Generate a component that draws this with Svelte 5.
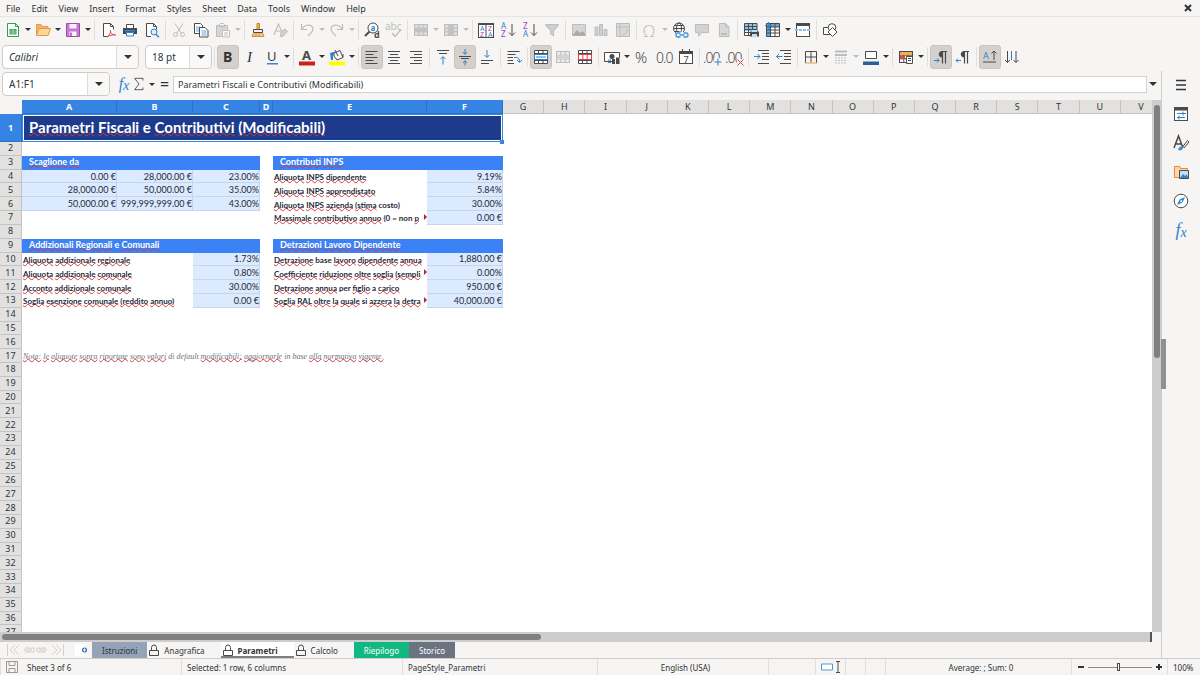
<script lang="ts">
  type Tool = { icon?: string; label?: string; drop?: boolean; on?: boolean; off?: boolean; sep?: boolean };
  type Cell = { span?: number; text?: string; kind?: string; cut?: boolean };

  const menus = ["File", "Edit", "View", "Insert", "Format", "Styles", "Sheet", "Data", "Tools", "Window", "Help"];

  const K = "#4a4a4a";
  const B = "#2f83cc";
  const G = "#bdbdbd";
  const P = "#a33fb0";
  const R = "#e0434b";
  const line = (d: string, c = K, w = 1) => `<path d="${d}" fill="none" stroke="${c}" stroke-width="${w}"/>`;
  const fill = (d: string, c = K) => `<path d="${d}" fill="${c}"/>`;
  const glyph = (t: string, x: number, y: number, s: number, c = K, extra = "") =>
    `<text x="${x}" y="${y}" font-size="${s}" fill="${c}" font-family="Noto Sans, sans-serif" ${extra}>${t}</text>`;
  const grid = (c: string, bg = "#fff") =>
    `<rect x="1.5" y="2.5" width="13" height="11" fill="${bg}" stroke="${c}"/>` +
    line("M1.5 6.2h13M1.5 9.8h13M5.8 2.5v11M10.2 2.5v11", c);
  const bold = 'font-weight="bold"';
  const thin = 'font-weight="300"';

  const icons: Record<string, string> = {
    new: fill("M2.5 1.5h8l3 3v10h-11z", "#fff") + line("M2.5 1.5h8l3 3v10h-11zM10.5 1.5v3h3", "#2f9e4f") +
      fill("M4.5 7h7v5.5h-7z", "#2f9e4f") + line("M4.5 9h7M4.5 11h7M8 7v6", "#d8f0dd", 0.6),
    open: fill("M1 2.5h5l1.5 2H13v3H4L1 13.5z", "#f6b26b") + fill("M4 6.5h12L13.5 14h-12z", "#fbd69c") +
      line("M1.5 13.5v-11H6l1.5 2H13v2M4 6.5h11.5l-2.5 7H1.5z", "#e59a45"),
    save: fill("M1.5 1.5h13v13h-13z", "#c679d0") + fill("M4.5 1.5h7v5h-7zM4.5 9.5h7v5h-7z", "#fbf3fc") +
      line("M1.5 1.5h13v13h-13z", "#a14cad") + line("M6 10.5V14", "#a14cad", 1.5),
    pdf: fill("M3.5 1.5h7l3 3v10h-10z", "#fff") + line("M8 14.5H3.5v-13h7l3 3v3M10.5 1.5v3h3") +
      line("M7 15c3-2 3.5-4.5 3.5-6.5 0 3 2 4.5 5 4.5-3-.5-6 .5-8.500 2", R),
    print: fill("M4 2h8v4H4z", "#fff") + line("M4.5 6V2.5h7V6") + fill("M1 6h14v6H1z") +
      fill("M3 8h10v1.500H3z", B) + fill("M4 10.5h8v4H4z", "#fff") + line("M4.5 10.5h7V14h-7z", B),
    preview: fill("M2.5 1.5h7l3 3v10h-10z", "#fff") + line("M7 14.5H2.5v-13h7l3 3v3M9.5 1.5v3h3") +
      `<circle cx="10" cy="10" r="3" fill="#d9ecfa" stroke="${B}"/>` + line("M12 12.5l3 2.8", B, 1.5),
    cut: line("M4 1.5l6.5 10M12 1.5l-6.5 10", G) +
      `<g fill="none" stroke="${G}"><circle cx="4.5" cy="12.5" r="2"/><circle cx="11.5" cy="12.5" r="2"/></g>`,
    copy: fill("M1.5 1.5h6l2 2v8h-8z", "#fff") + line("M1.5 1.5h6l2 2v8h-8z") + line("M3 5h4M3 7h4M3 9h4", B, 0.7) +
      fill("M6.5 5.5H12L15 8.5V15H6.5z", "#fff") + line("M6.5 5.5H12l3 3V15H6.5z") + line("M8.5 9h5M8.5 11h5M8.5 13h5", B, 0.7),
    paste: fill("M1.5 3h11v12h-11z", "#d6d6d6") + line("M4.5 3.5h-3v11h5M9.5 3.5h3v4M4.5 4.500v-2l1-1h3l1 1v2z", G) +
      fill("M7.5 8.5h7v7h-7z", "#fff") + line("M7.5 8.5h7V15h-7zM9 11h4M9 13h4", G),
    brush: fill("M7 1h2.5v6H7z", "#f2b04d") + line("M7 1.5h2.5v6H7z", "#c98227") + line("M3.5 7.5h9v3h-9z") +
      fill("M3 11h10l1 4H2z", "#f7c987") + line("M3.5 11L2 14.5h12L12.5 11M6 11v3M9 11v3", "#d58d31"),
    clear: line("M2 13L6.5 2 11 13M3.5 9h5", G, 1.2) + fill("M9 10l4-3 2.5 2.5-4.5 5H8.500z", "#d0d0d0") +
      line("M9 10l4-3 2.5 2.5-4.5 5H8.5z", G),
    undo: line("M2.5 2v5.500H8M2.5 7.500C5 3 11 1.5 13.500 5c1.500 3-1 6-4.500 9", G, 1.2),
    redo: line("M13.500 2v5.500H8M13.500 7.500C11 3 5 1.500 2.500 5c-1.500 3 1 6 4.500 9", G, 1.2),
    find: `<circle cx="9" cy="6" r="5" fill="#fff" stroke="${K}"/>` + line("M5.5 9.5L1 14", K, 2) +
      glyph("a", 6.5, 8.5, 8, B, bold) + glyph("d", 10, 15.5, 9, K, bold),
    spell: glyph("abc", -1, 8, 10, G) + line("M6 11l3 3.5 6-7", G, 1.3),
    rows: grid(G, "#ddd") + fill("M1 6h14v4H1z", "#c2c2c2"),
    cols: grid(G, "#ddd") + fill("M5.5 2h5v12h-5z", "#c2c2c2"),
    autosort: `<rect x=".5" y="1.5" width="15" height="14" fill="#fff" stroke="${K}"/>` + fill("M0 1h16v2H0z") + line("M8 3v12") +
      glyph("A", 2, 9, 7, B) + glyph("Z", 2, 15, 7, P) + glyph("Z", 10, 9, 7, P) + glyph("A", 10, 15, 7, B),
    asc: glyph("A", 1, 7, 8, B) + glyph("Z", 1, 15, 8, P) + line("M12 2v11.5M9 10.5l3 3 3-3"),
    desc: glyph("Z", 1, 7, 8, P) + glyph("A", 1, 15, 8, B) + line("M12 2v11.5M9 10.5l3 3 3-3"),
    filter: fill("M1.5 2h13v2L10 9v5l-3-1.5V9L1.5 4z", "#cfcfcf") + line("M1.5 2.5h13l-5 6V14l-3-2V8.5z", G),
    image: fill("M1.5 2h13v12h-13z", "#d5d5d5") + line("M1.5 2.5h13v11h-13z", G) + fill("M2 13l4-5 3 3 2.5-2 2.5 3v1.5H2z", "#a9a9a9"),
    chart: fill("M2 5h3v9H2zM6.500 2h3v12h-3zM11 7.5h3V14h-3z", "#cfcfcf") + line("M2 5h3v8.500H2zM6.500 2.5h3v11h-3zM11 7.5h3v6h-3z", G),
    pivot: fill("M1.5 1.5h13v13h-13z", "#dadada") + line("M1.5 1.5h13v13h-13zM1.5 5h13M5 1.5v13M7.5 12.5c3 0 4.5-1.5 4.5-4M10.5 9L12 7.5 13.5 9", G),
    omega: glyph("Ω", 1, 14.5, 17, G, thin),
    link: `<g fill="none" stroke="${K}"><circle cx="7" cy="6.5" r="5.5"/><ellipse cx="7" cy="6.5" rx="2.5" ry="5.5"/></g>` +
      line("M1.5 6.5h11M2.5 3.5h9M2.5 9.5h5") + fill("M4 10h12v6H4z", "#f6f5f4") +
      line("M8.5 15H6a2 2 0 0 1 0-4h2.5M11.5 11H14a2 2 0 0 1 0 4h-2.5M7.5 13h5", "#3b93da", 1.3),
    comment: fill("M1.5 2h13v9H8l-3.500 4v-4h-3z", "#d3d3d3") + line("M1.5 2.5h13v8H8L4.5 14v-3.500h-3z", G),
    header: fill("M3 1.5h7l3 3v10H3z", "#d8d8d8") + line("M3.5 1.5h6L13 5v9.5H3.5zM9.5 1.5V5H13", G) + line("M5 12h6", G, 2),
    printarea: fill("M1 1.5h13V14H1z", "#fff") + fill("M1 1.5h13V9H1z", "#8dc5ee") +
      line("M1.5 1.5H14v12H1.5zM1.5 4.5H14M1.5 7.5H14M1.5 10.5H14M5.5 1.5v12M9.5 1.5v12") +
      fill("M7 9.500h9v5H7z") + fill("M9 8h5v2H9zM9 12h5v3.500H9z", "#bfe0f7"),
    freeze: fill("M1.5 1.5h13v13h-13z", "#fff") + fill("M1.5 1.5h13V5h-13zM1.5 1.5h4v13h-4z", "#5aace6") +
      line("M1.5 1.5h13v13h-13zM1.5 5h13M1.5 8h13M1.5 11h13M5.5 1.5v13M10 1.5v13") + line("M3.5 0v7M0 3.5h7", B),
    split: `<rect x="1.5" y="1.5" width="13" height="13" fill="#fff" stroke="${K}"/>` + fill("M1 1h14v3H1z") +
      fill("M0 7h16v2H0z", "#f6f5f4") + `<path d="M0 8h16" stroke="${B}" stroke-dasharray="3 1"/>`,
    shapes: fill("M1.5 5.5h7v7h-7z", "#fff") + line("M1.5 5.5h7v7h-7z") + `<circle cx="10" cy="5.5" r="3.8" fill="#fff" stroke="${K}"/>` +
      fill("M10.5 5.5L15 10l-4.5 4.5L6 10z", "#fff") + line("M10.5 5.5L15 10l-4.5 4.5L6 10z"),
    bold: glyph("B", 3, 13, 14, "#2e3436", bold),
    italic: `<text x="5" y="13" font-size="15" fill="#2e3436" font-family="Liberation Serif, serif" font-style="italic">I</text>`,
    underline: glyph("U", 3, 12, 13, "#3c4144") + fill("M3 14h11v1.500H3z", "#3584e4"),
    color: glyph("A", 3, 10.5, 13, K, bold) + fill("M0 12.5h16v4H0z", "#c9211e"),
    bucket: line("M5 4l6-2.5 3 7L8 11 5 7z") + line("M6 1l3 6M14 8V5") + fill("M1 4l5-1.5L4 7v4H2z", B) + fill("M0 12.5h16v4H0z", "#ffff00"),
    left: line("M1.5 2.5h12M1.5 5.5h8M1.5 8.5h12M1.5 11.5h8M1.5 14.5h12"),
    center: line("M2 2.5h12M4 5.5h8M2 8.5h12M4 11.5h8M2 14.5h12"),
    right: line("M2 2.5h12M6 5.5h8M2 8.5h12M6 11.5h8M2 14.5h12"),
    top: line("M2 1.5h12M4 4.5h8") + line("M8 15.500V8M5.5 10L8 7.5l2.5 2.5", B),
    middle: line("M2 7.5h12M4 9.5h8") + line("M8 0v5M6 3l2 2.5L10 3M8 16.500V12M6 14l2-2.500 2 2.500", B),
    bottom: line("M2 11.5h12M2 14.5h8") + line("M8 1v7M5.5 6L8 8.5 10.5 6", B),
    wrap: line("M1.5 2.5h12M1.5 5.5h8M1.5 8.5H7M1.5 11.5H7M1.5 14.5h12") + fill("M8 11h7v5H8z", "#f6f5f4") +
      line("M8 8.5h2.500c2 0 3 1.500 3 4.500M11 11l2.500 2.500L16 11", B),
    merge: fill("M1 2h14v12H1z", "#fff") + line("M1.5 1.5h13v13h-13zM1.5 4.5h13M1.5 11.5h13M5.5 1.5v3M10 1.5v3M5.5 11.5v3M10 11.5v3") +
      line("M1.5 5.5h13v5h-13zM3 8h10", B),
    mergecenter: grid(G, "#ececec") + fill("M2 6h12v4H2z", "#d3d3d3"),
    unmerge: fill("M1 2h14v12H1z", "#fff") + line("M1.5 1.5h13v13h-13zM1.5 4.5h13M1.5 11.5h13M5.5 1.5v3M10 1.5v3M5.5 11.5v3M10 11.5v3") +
      line("M1.5 5.5h13v5h-13zM5.8 5.5v5M10.2 5.5v5", R),
    currency: fill("M.5 4h15v7H.5z", "#fff") + line("M8 12.5H.5v-9h15v5") + `<circle cx="8" cy="7.5" r="2.5" fill="${K}"/>` +
      line("M4 13.5h3M4 11h3", B) + fill("M8 10h3v5H8zM12 8.5h3.500V15H12z"),
    percent: glyph("%", 1, 13.5, 15, K, thin),
    number: glyph("0.0", 0, 13.5, 14, K, `${thin} letter-spacing="-1"`),
    date: `<rect x="1.5" y="2.5" width="13" height="12" fill="#fff" stroke="${K}"/>` + fill("M1 2h14v3H1zM4 0h1v3H4zM11 0h1v3h-1z") + glyph("7", 5.5, 13.5, 9),
    adddec: glyph(".00", -2, 13.5, 14, K, `${thin} letter-spacing="-1"`) + fill("M9 9h8v8H9z", "#f6f5f4") + line("M9.500 13h7M13 9.500v7", B),
    deldec: glyph(".00", -2, 13.5, 14, K, `${thin} letter-spacing="-1"`) + fill("M10 10h7v7h-7z", "#f6f5f4") + line("M10.500 10.500l6 6M16.500 10.500l-6 6", R),
    indent: line("M4 1.5h11M8 4.5h7M8 7.5h7M8 10.5h7M4 14.5h11") + line("M0 7.5h6M3.5 5L6 7.5 3.5 10", B),
    outdent: line("M4 1.5h11M8 4.5h7M8 7.5h7M8 10.5h7M4 14.5h11") + line("M6.5 7.5h-6M3 5L.5 7.5 3 10", B),
    borders: line("M2.5 14V2.5h11V14M8 2.5v11M2.5 8h11") + line("M2 14h12", "#e8a04c"),
    style: line("M2 2.5h12M2 6h12", G, 2) + `<path d="M2 9h12M2 11.5h12M2 14h12" stroke="${G}" stroke-dasharray="2 1"/>`,
    bordercolor: fill("M2 2h12v8H2z", "#fff") + line("M2.5 2.5h11v7h-11z") + fill("M0 12.5h16V16H0z", "#2a6099"),
    cond: grid(K) + fill("M2 3h12v3H2z", "#f2b04d") + fill("M2 7h5v3H2z", R) + fill("M9 8h7v7H9z", "#fff") + line("M8.5 7.5h6v7h-6zM10 9.5h3M10 11.5h3"),
    ltr: line("M8 2.5h6M9.5 2.5v12M12.5 2.5v12", K, 1.2) + fill("M9.5 2C4.500 2 4.500 8.500 9.5 8.500z") + line("M1 11.5h5M4 9.5l2 2-2 2", B),
    rtl: line("M8 2.5h6M9.5 2.5v12M12.5 2.5v12", K, 1.2) + fill("M9.5 2C4.500 2 4.500 8.500 9.5 8.500z") + line("M6 11.5H1M3 9.5l-2 2 2 2", B),
    horiz: glyph("A", 1, 10, 9, B) + line("M1 13h13M12 2v9M9.5 4.5L12 2l2.5 2.5"),
    vert: line("M3.5 2v11.5M1 11l2.500 2.500L6 11M12 2v11.500M9.500 11l2.500 2.500 2.500-2.500") + line("M7.5 2v9", B),
    sum: line("M12.500 4V1.5H3L8 8l-5 6.500h9.500V12"),
    props: `<rect x="1.5" y="1.5" width="13" height="13" fill="#fff" stroke="${K}"/>` + fill("M1 1h14v3.500H1z") + line("M4 7.5h9M10 5.5v4M4 11.5h8M6 9.5v4", B),
    styles: line("M1 13L5.5 1 10 13M3 9h5.500", K, 1.5) + fill("M5 15c1-4 3-4 5-3 0 3-2 4-5 3z", "#3b93da") + line("M9.5 12l5-6.500L16 7l-5 6"),
    gallery: fill("M1 2h6l1 2h7v10H1z", "#fcd7a5") + line("M1.5 13.5v-11h5l1 2h7v3M1.5 13.5H6", "#e8893a") + fill("M6.500 7h9v8h-9z", "#bfe0f7") +
      line("M6.5 6.5h9v8h-9z") + fill("M7 14l3-4 2 2 1.500-1.500 2 3.500z", B),
    navigator: `<circle cx="8" cy="8" r="6.8" fill="#fff" stroke="${K}"/>` + fill("M12 4L9.5 9.5 4 12l2.500-5.500z", B) + fill("M8 7l1.500 1L8 9.5 7 8z", "#fff"),
    burger: line("M3 3.5h10M3 8h10M3 12.5h10", "#2e3436", 1.6)
  };

  const sep: Tool = { sep: true };
  const standard: Tool[] = [
    { icon: "new", label: "New", drop: true }, { icon: "open", label: "Open", drop: true }, { icon: "save", label: "Save", drop: true }, sep,
    { icon: "pdf", label: "Export as PDF" }, { icon: "print", label: "Print" }, { icon: "preview", label: "Print Preview" }, sep,
    { icon: "cut", label: "Cut", off: true }, { icon: "copy", label: "Copy" }, { icon: "paste", label: "Paste", drop: true, off: true }, sep,
    { icon: "brush", label: "Clone Formatting" }, { icon: "clear", label: "Clear Formatting", off: true }, sep,
    { icon: "undo", label: "Undo", drop: true, off: true }, { icon: "redo", label: "Redo", drop: true, off: true }, sep,
    { icon: "find", label: "Find & Replace" }, { icon: "spell", label: "Spelling", off: true }, sep,
    { icon: "rows", label: "Row", drop: true, off: true }, { icon: "cols", label: "Column", drop: true, off: true }, sep,
    { icon: "autosort", label: "Sort" }, { icon: "asc", label: "Sort Ascending" }, { icon: "desc", label: "Sort Descending" }, { icon: "filter", label: "AutoFilter", off: true }, sep,
    { icon: "image", label: "Image", off: true }, { icon: "chart", label: "Chart", off: true }, { icon: "pivot", label: "Pivot Table", off: true }, sep,
    { icon: "omega", label: "Symbol", drop: true, off: true }, { icon: "link", label: "Hyperlink" }, { icon: "comment", label: "Comment", off: true }, { icon: "header", label: "Headers and Footers", off: true }, sep,
    { icon: "printarea", label: "Print Area" }, { icon: "freeze", label: "Freeze", drop: true }, { icon: "split", label: "Split Window" }, sep,
    { icon: "shapes", label: "Draw Functions" }
  ];
  const formatting: Tool[] = [
    { icon: "bold", label: "Bold", on: true }, { icon: "italic", label: "Italic" }, { icon: "underline", label: "Underline", drop: true }, sep,
    { icon: "color", label: "Font Color", drop: true }, { icon: "bucket", label: "Background Color", drop: true }, sep,
    { icon: "left", label: "Align Left", on: true }, { icon: "center", label: "Center" }, { icon: "right", label: "Align Right" }, sep,
    { icon: "top", label: "Align Top" }, { icon: "middle", label: "Center Vertically", on: true }, { icon: "bottom", label: "Align Bottom" }, sep,
    { icon: "wrap", label: "Wrap Text" }, sep,
    { icon: "merge", label: "Merge and Center", on: true }, { icon: "mergecenter", label: "Merge Cells", off: true }, { icon: "unmerge", label: "Unmerge Cells" }, sep,
    { icon: "currency", label: "Currency", drop: true }, { icon: "percent", label: "Percent" }, { icon: "number", label: "Number" }, { icon: "date", label: "Date" }, sep,
    { icon: "adddec", label: "Add Decimal" }, { icon: "deldec", label: "Delete Decimal" }, sep,
    { icon: "indent", label: "Increase Indent" }, { icon: "outdent", label: "Decrease Indent" }, sep,
    { icon: "borders", label: "Borders", drop: true }, { icon: "style", label: "Border Style", drop: true, off: true }, { icon: "bordercolor", label: "Border Color", drop: true }, sep,
    { icon: "cond", label: "Conditional", drop: true }, sep,
    { icon: "ltr", label: "Left-To-Right", on: true }, { icon: "rtl", label: "Right-To-Left" }, sep,
    { icon: "horiz", label: "Text Horizontal", on: true }, { icon: "vert", label: "Text Vertical" }
  ];
  const deck = [
    ["burger", "Sidebar Settings"], ["props", "Properties"], ["styles", "Styles"],
    ["gallery", "Gallery"], ["navigator", "Navigator"]
  ];

  const columns = "ABCDEFGHIJKLMNOPQRSTUV".split("");
  const t = (text: string, span = 1, cut = false): Cell => ({ text, span, cut, kind: "label" });
  const v = (text: string): Cell => ({ text, kind: "value" });
  const h = (text: string, span: number): Cell => ({ text, span, kind: "head" });
  const gap = (span = 1): Cell => ({ span });

  const data: Record<number, Cell[]> = {
    1: [{ text: "Parametri Fiscali e Contributivi (Modificabili)", span: 6, kind: "title" }],
    3: [h("Scaglione da", 3), gap(), h("Contributi INPS", 2)],
    4: [v("0.00 €"), v("28,000.00 €"), v("23.00%"), gap(), t("Aliquota INPS dipendente"), v("9.19%")],
    5: [v("28,000.00 €"), v("50,000.00 €"), v("35.00%"), gap(), t("Aliquota INPS apprendistato"), v("5.84%")],
    6: [v("50,000.00 €"), v("999,999,999.00 €"), v("43.00%"), gap(), t("Aliquota INPS azienda (stima costo)"), v("30.00%")],
    7: [gap(4), t("Massimale contributivo annuo (0 = non p", 1, true), v("0.00 €")],
    9: [h("Addizionali Regionali e Comunali", 3), gap(), h("Detrazioni Lavoro Dipendente", 2)],
    10: [t("Aliquota addizionale regionale", 2), v("1.73%"), gap(), t("Detrazione base lavoro dipendente annua"), v("1,880.00 €")],
    11: [t("Aliquota addizionale comunale", 2), v("0.80%"), gap(), t("Coefficiente riduzione oltre soglia (sempli", 1, true), v("0.00%")],
    12: [t("Acconto addizionale comunale", 2), v("30.00%"), gap(), t("Detrazione annua per figlio a carico"), v("950.00 €")],
    13: [t("Soglia esenzione comunale (reddito annuo)", 2), v("0.00 €"), gap(), t("Soglia RAL oltre la quale si azzera la detra", 1, true), v("40,000.00 €")],
    17: [{ text: "Nota: le aliquote sopra riportate sono valori di default modificabili; aggiornarle in base alla normativa vigente.", span: 9, kind: "note" }]
  };
  const rows = Array.from({ length: 37 }, (_, i) => i + 1);

  // words the dictionary accepts; everything else gets a wavy line
  const known = new Set(["e", "a", "si", "per", "in", "di", "base", "default", "(0", "=", "non", "costo)"]);
  const words = (text: string) => text.split(" ").map((w) => ({ w, bad: !known.has(w) }));
</script>

{#snippet icon(name: string)}
  <svg class="icon" viewBox="0 0 16 16" aria-hidden="true">{@html icons[name]}</svg>
{/snippet}

{#snippet arrow()}
  <svg class="arrow" viewBox="0 0 8 4" aria-hidden="true"><path d="M0 0h8L4 4z" /></svg>
{/snippet}

{#snippet tools(items: Tool[])}
  {#each items as item}
    {#if item.sep}
      <span class="sep"></span>
    {:else}
      <button class="tool" class:on={item.on} aria-label={item.label} disabled={item.off}>
        {@render icon(item.icon ?? "")}
      </button>
      {#if item.drop}
        <button class="drop" aria-label="{item.label} options" disabled={item.off}>{@render arrow()}</button>
      {/if}
    {/if}
  {/each}
{/snippet}

{#snippet lock()}
  <svg class="lock" viewBox="0 0 10 12" aria-hidden="true"><path d="M.5 6.5h9v5h-9zM2.5 6.5v-3a2.5 2.5 0 0 1 5 0v3" /></svg>
{/snippet}

<div class="app">
  <nav class="menubar">
    {#each menus as menu}
      <button>{menu}</button>
    {/each}
    <button class="close" aria-label="Close document">
      <svg viewBox="0 0 8 8"><path d="M1 1l6 6M7 1L1 7" /></svg>
    </button>
  </nav>

  <div class="toolbar">{@render tools(standard)}</div>
  <div class="toolbar">
    <div class="combo font">
      <input aria-label="Font name" value="Calibri" />
      <button aria-label="Font list">{@render arrow()}</button>
    </div>
    <div class="combo size">
      <input aria-label="Font size" value="18 pt" />
      <button aria-label="Size list">{@render arrow()}</button>
    </div>
    <span class="sep"></span>
    {@render tools(formatting)}
  </div>

  <div class="body">
    <main class="doc">
      <div class="formula">
        <div class="combo namebox">
          <input aria-label="Name box" value="A1:F1" />
          <button aria-label="Name list">{@render arrow()}</button>
        </div>
        <button class="fx" aria-label="Function wizard">f<sub>x</sub></button>
        <button class="sum" aria-label="Select function">{@render icon("sum")}</button>
        <button class="drop" aria-label="Function options">{@render arrow()}</button>
        <button class="equals" aria-label="Formula">=</button>
        <input class="line" aria-label="Input line" value="Parametri Fiscali e Contributivi (Modificabili)" />
        <button class="expand" aria-label="Expand formula bar">{@render arrow()}</button>
      </div>

      <div class="pane">
        <div class="view">
          <table>
            <thead>
              <tr>
                <th class="corner" aria-label="Select all"></th>
                {#each columns as col, i}
                  <th class:picked={i < 6}>{col}</th>
                {/each}
              </tr>
            </thead>
            <tbody>
              {#each rows as n}
                <tr class:tall={n === 1}>
                  <th class:picked={n === 1}>{n}</th>
                  {#each data[n] ?? [] as cell}
                    <td class="{cell.kind ?? ''} span{cell.span ?? 1}" colspan={cell.span ?? 1}>
                      {#if cell.kind === "value"}
                        {cell.text}
                      {:else if cell.text}
                        <span>
                          {#each words(cell.text) as { w, bad }, i}{i ? " " : ""}<span class:bad>{w}</span>{/each}
                        </span>
                      {/if}
                      {#if cell.cut}
                        <svg class="more" viewBox="0 0 3 6" aria-hidden="true"><path d="M0 0l3 3-3 3z" /></svg>
                      {/if}
                    </td>
                  {/each}
                </tr>
              {/each}
            </tbody>
          </table>
        </div>
        <div class="vscroll"><div class="thumb"></div></div>
      </div>

      <div class="hscroll"><div class="thumb"></div></div>

      <div class="tabs">
        <div class="tabnav">
          <button aria-label="First sheet"><svg viewBox="0 0 14 12"><path d="M1.5 0v12M9 1L4 6l5 5M13 1L8 6l5 5" /></svg></button>
          <button aria-label="Previous sheet"><svg viewBox="0 0 14 12"><path d="M6 3L3 6l3 3zM7 4h2v4H7zM10 4h3v4h-3z" /></svg></button>
          <button aria-label="Next sheet"><svg viewBox="0 0 14 12"><path d="M8 3l3 3-3 3zM5 4h2v4H5zM1 4h3v4H1z" /></svg></button>
          <button aria-label="Last sheet"><svg viewBox="0 0 14 12"><path d="M12.5 0v12M1 1l5 5-5 5M5 1l5 5-5 5" /></svg></button>
        </div>
        <button class="addsheet" aria-label="Add sheet">
          <svg viewBox="0 0 14 12"><path d="M1 0h9v12H1z" fill="#fff" /><circle cx="10.5" cy="6" r="2.5" fill="#2f6fbd" /><path d="M10.5 4.5v3M9 6h3" stroke="#fff" /></svg>
        </button>
        <button class="tab slate">Istruzioni</button>
        <button class="tab">{@render lock()}Anagrafica</button>
        <button class="tab active">{@render lock()}Parametri</button>
        <button class="tab">{@render lock()}Calcolo</button>
        <button class="tab green">Riepilogo</button>
        <button class="tab grey">Storico</button>
      </div>
    </main>

    <aside class="sidebar">
      {#each deck as [name, label]}
        <button class="tool" aria-label={label}>{@render icon(name)}</button>
      {/each}
      <button class="fx" aria-label="Functions">f<sub>x</sub></button>
      <span class="grip"></span>
    </aside>
  </div>

  <footer class="status">
    <div class="saved">
      <svg viewBox="0 0 12 12" aria-hidden="true"><path d="M.5.5h11v11H.5zM3 .5v4h6v-4M3 11.5v-4h6v4" /></svg>
      Sheet 3 of 6
    </div>
    <div>Selected: 1 row, 6 columns</div>
    <div>PageStyle_Parametri</div>
    <div class="mid">English (USA)</div>
    <div></div>
    <div class="mode">
      <svg viewBox="0 0 20 12" aria-hidden="true">
        <path d="M.5 3h11v6H.5z" fill="#fff" stroke="#4a9bd8" />
        <path d="M15 .5h4M15 11.5h4M17 .5v11" fill="none" stroke="#4a4a4a" />
      </svg>
    </div>
    <div></div>
    <div></div>
    <div class="mid">Average: ; Sum: 0</div>
    <div class="zoom">
      <button aria-label="Zoom out"><svg viewBox="0 0 8 8"><path d="M1 4h6" /></svg></button>
      <input type="range" aria-label="Zoom" min="0" max="100" value="48" />
      <button aria-label="Zoom in"><svg viewBox="0 0 8 8"><path d="M1 4h6M4 1v6" /></svg></button>
    </div>
    <div class="pct">100%</div>
  </footer>
</div>

<style>
  :global(body) {
    margin: 0;
  }
  .app {
    --accent: #3584e4;
    --cols: 22px 95px 76px 67px 13px 154px 76px repeat(16, 1fr);
    display: flex;
    flex-direction: column;
    height: 100vh;
    overflow: hidden;
    background: #f6f5f4;
    color: #2e3436;
    font-family: "Noto Sans", sans-serif;
    font-size: 9px;
  }
  button,
  input {
    margin: 0;
    padding: 0;
    border: 0;
    background: none;
    color: inherit;
    font: inherit;
    outline: none;
  }
  svg {
    display: block;
    flex: none;
  }

  .menubar {
    display: flex;
    gap: 11px;
    height: 16px;
    padding: 0 6px;
    border-bottom: 1px solid #e6e4e2;
  }
  .menubar .close {
    width: 10px;
    margin-left: auto;
  }
  .close svg {
    width: 8px;
    height: 8px;
    fill: none;
    stroke: #2e3436;
    stroke-width: 2;
  }

  .toolbar {
    display: flex;
    align-items: center;
    box-sizing: border-box;
    height: 27px;
    padding: 0 2px 2px;
  }
  .tool {
    display: flex;
    flex: none;
    align-items: center;
    justify-content: center;
    box-sizing: border-box;
    width: 22px;
    height: 24px;
    border-radius: 3px;
  }
  .tool.on {
    border: 1px solid #c9c4bf;
    background: #d5d0cc;
  }
  .icon {
    width: 16px;
    height: 16px;
    overflow: visible;
  }
  .drop {
    display: flex;
    flex: none;
    align-items: center;
    justify-content: center;
    width: 8px;
    height: 24px;
  }
  .arrow {
    width: 6px;
    height: 3px;
    fill: #2e3436;
  }
  .drop:disabled .arrow {
    fill: #bdbdbd;
  }
  .sep {
    flex: none;
    width: 1px;
    height: 20px;
    margin: 0 2px;
    background: #e1dfdc;
  }

  .combo {
    display: flex;
    flex: none;
    box-sizing: border-box;
    height: 24px;
    border: 1px solid #cfcbc7;
    border-radius: 4px;
    background: #fff;
    font-size: 10px;
  }
  .combo input {
    flex: 1;
    min-width: 0;
    padding-left: 6px;
  }
  .combo button {
    display: flex;
    align-items: center;
    justify-content: center;
    width: 22px;
    border-left: 1px solid #dedbd8;
    border-radius: 0 4px 4px 0;
    background: #f9f8f7;
  }
  .combo .arrow,
  .expand .arrow {
    width: 8px;
    height: 4px;
  }
  .font {
    width: 137px;
    margin-right: 6px;
    font-style: italic;
  }
  .size {
    width: 67px;
  }
  .namebox {
    width: 108px;
  }

  .body {
    display: flex;
    flex: 1;
    min-height: 0;
  }
  .doc {
    display: flex;
    flex: 1;
    flex-direction: column;
    min-width: 0;
    border-right: 1px solid #cfcfcf;
  }
  .formula {
    display: flex;
    flex: none;
    align-items: center;
    box-sizing: border-box;
    height: 29px;
    padding: 0 2px 3px;
  }
  .fx {
    width: 16px;
    margin-left: 6px;
    color: #2f83cc;
    font-family: "Liberation Serif", serif;
    font-size: 16px;
    font-style: italic;
    line-height: 16px;
  }
  .fx sub {
    font-size: 14px;
    line-height: 0;
    vertical-align: -1px;
  }
  .sum {
    width: 16px;
  }
  .sum .icon {
    width: 14px;
    height: 14px;
  }
  .equals {
    width: 17px;
    font-size: 16px;
    line-height: 16px;
  }
  .line {
    flex: 1;
    min-width: 0;
    box-sizing: border-box;
    height: 17px;
    padding-left: 4px;
    border: 1px solid #d5d2cf;
    background: #fff;
  }
  .expand {
    display: flex;
    align-items: center;
    justify-content: center;
    width: 12px;
  }

  .pane {
    display: flex;
    flex: 1;
    min-height: 0;
  }
  .view {
    flex: 1;
    min-width: 0;
    overflow: hidden;
    background: #fff;
  }
  table {
    display: flex;
    flex-direction: column;
    width: calc(100% + 10px);
    height: calc(100% + 7px);
  }
  thead {
    display: block;
    flex: none;
    height: 14px;
  }
  tbody {
    display: flex;
    flex: 1;
    flex-direction: column;
    min-height: 0;
  }
  tr {
    display: grid;
    flex: 1;
    grid-template-columns: var(--cols);
    min-height: 0;
  }
  thead tr {
    height: 14px;
  }
  tr.tall {
    flex: none;
    height: 28px;
  }
  th {
    display: flex;
    align-items: center;
    justify-content: center;
    min-height: 0;
    padding: 0;
    border-right: 1px solid #c4c4c4;
    border-bottom: 1px solid #c4c4c4;
    background: #e2e1e0;
    font-size: 9px;
    font-weight: 400;
    line-height: 12px;
  }
  th.corner {
    border: 0;
    background: #f6f5f4;
  }
  th.picked {
    border-color: #2b72c8;
    background: var(--accent);
    color: #fff;
    font-weight: 700;
  }
  td {
    position: relative;
    display: flex;
    align-items: center;
    min-width: 0;
    min-height: 0;
    padding: 1px 1px 0;
    line-height: 12px;
    white-space: nowrap;
  }
  .span2 {
    grid-column: span 2;
  }
  .span3 {
    grid-column: span 3;
  }
  .span4 {
    grid-column: span 4;
  }
  .span6 {
    grid-column: span 6;
  }
  .span9 {
    grid-column: span 9;
  }
  .bad {
    text-decoration: underline wavy #d8343c 1px;
    text-decoration-skip-ink: none;
    text-underline-offset: -1px;
  }
  .value {
    justify-content: flex-end;
    padding-right: 0;
    border-right: 1px solid #c6d6ea;
    border-bottom: 1px solid #c6d6ea;
    background: #dbeafe;
    color: #1f2937;
    font-family: Lato, sans-serif;
    font-size: 9px;
  }
  .label {
    color: #1f2937;
    font-family: Lato, sans-serif;
    font-size: 8px;
    font-weight: 700;
  }
  .head {
    padding: 0 0 2px 7px;
    background: #3b82f6;
    color: #fff;
    font-family: Lato, sans-serif;
    font-size: 9px;
    font-weight: 700;
  }
  .title {
    padding: 0 0 3px 7px;
    background: #1e3a8a;
    color: #fff;
    font-family: Lato, sans-serif;
    font-size: 15px;
    font-weight: 700;
    line-height: 20px;
    box-shadow:
      inset 0 0 0 1px var(--accent),
      inset 0 0 0 2px #fff;
  }
  .title::after {
    content: "";
    position: absolute;
    right: -1px;
    bottom: -2px;
    width: 4px;
    height: 4px;
    background: var(--accent);
  }
  .note {
    color: #6b7280;
    font-family: "Liberation Serif", serif;
    font-size: 8px;
    font-style: italic;
  }
  .more {
    position: absolute;
    top: 3px;
    right: 0;
    width: 3px;
    height: 6px;
    fill: #b3262e;
  }

  .vscroll,
  .hscroll {
    background: #cdcdcd;
  }
  .vscroll {
    box-sizing: border-box;
    width: 9px;
    padding: 5px 1px 0 2px;
  }
  .vscroll .thumb {
    height: 48%;
    border-radius: 3px;
    background: #808080;
  }
  .hscroll {
    flex: none;
    box-sizing: border-box;
    height: 10px;
    margin-right: 9px;
    padding: 2px;
    border-right: 2px solid #555;
  }
  .hscroll .thumb {
    width: 47%;
    height: 6px;
    border-radius: 3px;
    background: #808080;
  }

  .tabs {
    display: flex;
    flex: none;
    height: 16px;
    font-size: 8px;
  }
  .tabnav {
    display: flex;
    gap: 1px;
    padding: 0 6px;
  }
  .tabnav svg,
  .addsheet svg {
    width: 14px;
    height: 12px;
    fill: none;
    stroke: #d3d1cf;
  }
  .addsheet {
    width: 21px;
    padding-left: 3px;
  }
  .addsheet svg {
    stroke: none;
  }
  .tab {
    display: flex;
    align-items: center;
    gap: 5px;
    padding: 0 10px;
  }
  .tab:has(.lock) {
    padding: 0 16px 0 2px;
  }
  .tab.active {
    box-shadow: inset 0 -2px #808080;
    background: #fff;
    font-weight: 700;
  }
  .slate {
    background: #94a3b8;
  }
  .green {
    background: #10b981;
    color: #fff;
  }
  .grey {
    background: #6b7280;
    color: #fff;
  }
  .lock {
    width: 10px;
    height: 12px;
    fill: none;
    stroke: #4a4a4a;
  }

  .sidebar {
    position: relative;
    display: flex;
    flex-direction: column;
    align-items: center;
    gap: 5px;
    width: 38px;
    padding-top: 2px;
  }
  .sidebar .fx {
    height: 24px;
    margin: 0;
    font-size: 18px;
  }
  .grip {
    position: absolute;
    top: 268px;
    left: -1px;
    width: 5px;
    height: 50px;
    background: #909090;
  }

  .status {
    display: grid;
    flex: none;
    grid-template-columns: 181fr 221fr 195fr 171fr 47px 30px 20px 20px 186fr 96px 33px;
    height: 16px;
    border-top: 1px solid #cfcdcb;
    font-size: 8px;
  }
  .status > div {
    display: flex;
    align-items: center;
    padding-left: 5px;
    border-left: 1px solid #e1dfdc;
    white-space: nowrap;
  }
  .status .mid {
    justify-content: center;
  }
  .saved svg {
    width: 12px;
    height: 12px;
    margin-right: 9px;
    fill: none;
    stroke: #9a9a9a;
  }
  .mode svg {
    width: 20px;
    height: 12px;
  }
  .status .zoom {
    gap: 3px;
    padding: 0 4px 0 5px;
  }
  .zoom svg {
    width: 8px;
    height: 8px;
    fill: none;
    stroke: #2e3436;
    stroke-width: 2;
  }
  .zoom input {
    flex: 1;
    min-width: 0;
    height: 10px;
    appearance: none;
    background: linear-gradient(#8c8c8c, #8c8c8c) center / 100% 1px no-repeat;
  }
  .zoom input::-webkit-slider-thumb {
    appearance: none;
    box-sizing: border-box;
    width: 3px;
    height: 8px;
    border: 1px solid #4a4a4a;
    background: #fff;
  }
</style>
